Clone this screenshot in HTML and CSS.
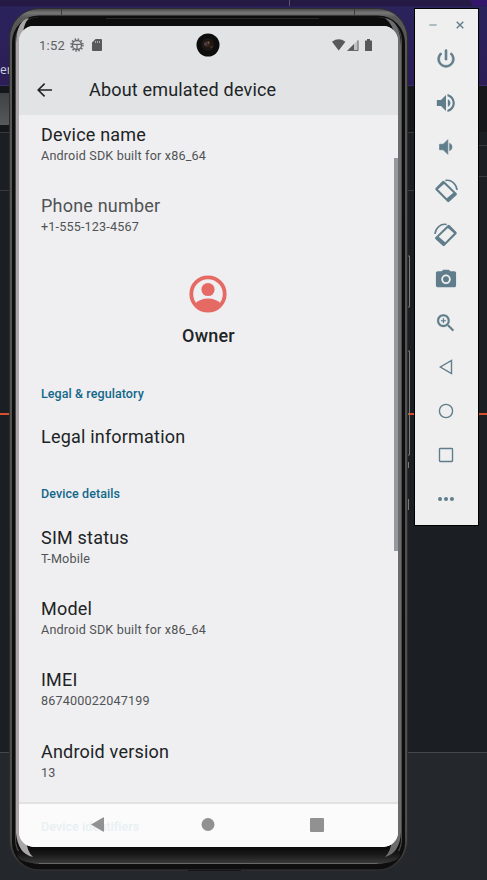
FILE: index.html
```html
<!DOCTYPE html>
<html lang="en">
<head>
<meta charset="utf-8">
<title>Android Emulator</title>
<link rel="stylesheet" href="styles.css">
</head>
<body>
<svg class="backdrop" width="487" height="880" viewBox="0 0 487 880" aria-hidden="true">
  <defs>
    <linearGradient id="purple" x1="0" y1="0" x2="0" y2="1"><stop offset="0" stop-color="#241b43"/><stop offset=".07" stop-color="#241944"/><stop offset=".08" stop-color="#2b235c"/><stop offset="1" stop-color="#2c1d56"/></linearGradient>
    <linearGradient id="grey" x1="0" y1="0" x2="0" y2="1"><stop offset="0" stop-color="#3f4144"/><stop offset="1" stop-color="#56585a"/></linearGradient>
  </defs>
  <rect width="487" height="880" fill="#1b1e23"/>
  <rect width="487" height="85" fill="url(#purple)"/>
  <path d="M470 0h17v6h-14z" fill="#34176a"/>
  <path d="M0 85.500h487" stroke="#38306c"/>
  <rect y="86" width="487" height="46" fill="#15171a"/>
  <rect y="93" width="10" height="32" fill="url(#grey)"/>
  <path d="M0 132.500h10M0 190.500h10M407 132.500h8M407 190.500h8M479 145.500h8M479 176.500h8" stroke="#383a3f"/>
  <path d="M289.500 0v6" stroke="#5a526e"/>
  <path d="M0 414h487" stroke="#d94f2c" stroke-width="2"/>
  <rect y="752" width="487" height="128" fill="#24272c"/>
  <path d="M0 752.500h487" stroke="#44474b"/>
  <path d="M408 256h1.500v51H408M408 351h1.500v104H408M408.500 462v6M408.500 499v11" stroke="#777a7b" fill="none"/>
</svg>
<span class="behind">er</span>
<main class="desk">
  <section class="phone">
    <svg class="frame" width="399" height="863" viewBox="0 0 399 863" aria-hidden="true">
      <defs>
        <linearGradient id="rim" x1="0" y1="0" x2="0" y2="1"><stop offset="0" stop-color="#444"/><stop offset=".005" stop-color="#777"/><stop offset=".01" stop-color="#585858"/><stop offset=".95" stop-color="#4c4c4c"/><stop offset="1" stop-color="#383838"/></linearGradient>
        <linearGradient id="chin" x1="0" y1="0" x2="0" y2="1"><stop offset="0" stop-color="#090909"/><stop offset=".5" stop-color="#181818"/><stop offset="1" stop-color="#383838"/></linearGradient>
      </defs>
      <rect x=".5" y=".5" width="398" height="862" rx="30" fill="url(#rim)" stroke="#2d2d2d"/>
      <rect x="3" y="7.500" width="393" height="854" rx="27" fill="#0e0e0e"/>
      <rect x="6" y="9" width="387" height="847" rx="24" fill="#4a4a4a"/>
      <rect x="7" y="9" width="385" height="846" rx="24" fill="#0c0c0c"/>
      <rect x="8" y="838" width="383" height="17" rx="17" fill="url(#chin)"/>
      <path d="M30 855.500H368" stroke="#686868"/>
      <path d="M7 35Q8 12 20 10Q15 15 14 25L10 42V820Q15 820 17 831Q18 844 24 849Q9 846 7 825Z" fill="#aaa5a6"/>
      <path d="M392 38Q391 12 376 10Q384 17 385 26L389 42V820Q384 820 383 831Q382 843 376 849Q391 845 392 824Z" fill="#6c6c6c"/>
      <path d="M52.500 1v7M345.500 1v7" stroke="#3b3b3b"/>
      <path d="M97 10.500H310" stroke="#292929"/>
      <path d="M179 862.500h53" stroke="#151515"/>
    </svg>
    <div class="screen">
      <header class="top">
        <div class="status">
          <time>1:52</time>
          <svg class="cog" width="14" height="14" viewBox="0 0 14 14" fill="none" stroke="#66686a"><circle cx="7" cy="7" r="4.600" stroke-width="1.500"/><circle cx="7" cy="7" r="6" stroke-width="1.500" stroke-dasharray="1.500 1.642"/><path d="M3 6.300h8M7 7v5" stroke-width="1.200"/></svg>
          <svg class="sd" width="10" height="12" viewBox="0 0 10 12"><path d="M3.600 0H9q1 0 1 1v10q0 1-1 1H1q-1 0-1-1V3.600Z" fill="#58595b"/><path d="M3.500 2v2M5.500 2v2M7.500 2v2" stroke="#a7a8aa"/></svg>
          <svg class="signal" width="41" height="13" viewBox="0 0 41 13" fill="#58595b"><path d="M0 2.800Q6.700-2.100 13.400 2.800L6.700 11.500Z"/><path d="M15 12L26.500.5V12Z" fill="#c0c1c3"/><path d="M15 12L22 5V12Z"/><path d="M16 11.500H26V1.500" fill="none" stroke="#6a6b6d"/><path d="M33.500 1.500h1.500V0h3v1.500h1.500q.5 0 .5.500v9.500q0 .5-.5.500h-6q-.5 0-.5-.5V2q0-.5.500-.5Z"/></svg>
        </div>
        <div class="bar">
          <svg width="16" height="14" viewBox="0 0 16 14" fill="none" stroke="#202325" stroke-width="1.600"><path d="M15 7H1.500M7.600.6L1.200 7l6.400 6.400"/></svg>
          <h1>About emulated device</h1>
        </div>
        <svg class="camera" width="24" height="24" viewBox="0 0 24 24"><circle cx="12" cy="12" r="11.500" fill="#0c0d0c"/><circle cx="12" cy="11.500" r="6.500" fill="#1c1715"/><circle cx="11" cy="11" r="3" fill="#382820"/><circle cx="9.500" cy="11" r="1.500" fill="#50405c"/><circle cx="12.500" cy="9.500" r="1" fill="#985e28"/><circle cx="15.500" cy="14" r="1.200" fill="#4d3028"/></svg>
      </header>
      <div class="list">
        <div class="item"><h2>Device name</h2><p>Android SDK built for x86_64</p></div>
        <div class="item muted"><h2>Phone number</h2><p>+1-555-123-4567</p></div>
        <div class="owner">
          <svg width="38" height="38" viewBox="0 0 38 38"><circle cx="19" cy="19" r="16.700" fill="none" stroke="#e66a64" stroke-width="3.800"/><circle cx="19" cy="14.500" r="6.600" fill="#e66a64"/><path d="M6 29Q10.500 23.500 19 23.500T32 29Q28 36.500 19 36.500T6 29Z" fill="#e66a64"/></svg>
          <strong>Owner</strong>
        </div>
        <h3>Legal &amp; regulatory</h3>
        <div class="item single"><h2>Legal information</h2></div>
        <h3>Device details</h3>
        <div class="item"><h2>SIM status</h2><p>T-Mobile</p></div>
        <div class="item"><h2>Model</h2><p>Android SDK built for x86_64</p></div>
        <div class="item"><h2>IMEI</h2><p>867400022047199</p></div>
        <div class="item"><h2>Android version</h2><p>13</p></div>
      </div>
      <div class="scroll"></div>
      <footer class="nav">
        <span class="ghost">Device identifiers</span>
        <svg width="13" height="15" viewBox="0 0 13 15"><path d="M0 7.500L12 .5q1-.5 1 .5v13q0 1-1 .5Z" fill="#919191"/></svg>
        <svg width="13" height="13" viewBox="0 0 13 13"><circle cx="6.500" cy="6.500" r="6.500" fill="#919191"/></svg>
        <svg width="14" height="14" viewBox="0 0 14 14"><rect width="14" height="14" rx="1" fill="#919191"/></svg>
      </footer>
    </div>
  </section>
  <aside class="tools">
    <div class="window">
      <svg width="8" height="8" viewBox="0 0 8 8"><path d="M.3 4h7.400" stroke="#9aacb3" stroke-width="1.500"/></svg>
      <svg width="8" height="8" viewBox="0 0 8 8"><path d="M.7.700l6.600 6.600M7.300.700L.7 7.300" stroke="#607d8b" stroke-width="1.400"/></svg>
    </div>
    <svg viewBox="0 0 24 24"><path d="M13 2h-2v11h2V2zm4.830 3.170l-1.420 1.420C17.990 7.860 19 9.810 19 12c0 3.870-3.130 7-7 7s-7-3.130-7-7c0-2.190 1.010-4.140 2.580-5.420L6.170 5.170C4.230 6.820 3 9.260 3 12c0 4.970 4.030 9 9 9s9-4.030 9-9c0-2.740-1.230-5.180-3.170-6.830z" stroke="#607d8b" stroke-width=".8"/></svg>
    <svg viewBox="0 0 24 24"><path d="M2 8.600v6.800h4.500l5.500 5.400V3.200L6.500 8.600H2zm14.800 3.400c0-1.800-1-3.300-2.800-4.200v8.400c1.800-.9 2.800-2.400 2.800-4.200zM13.600 2.100v2.600c3.200.9 5.600 3.800 5.600 7.300s-2.400 6.400-5.600 7.300v2.600c4.600-1 8-5 8-9.900s-3.400-8.900-8-9.900z"/></svg>
    <svg viewBox="0 0 24 24"><path d="M18.500 12c0-1.770-1.020-3.290-2.500-4.030v8.050c1.480-.73 2.500-2.250 2.500-4.020zM5 9v6h4l5 5V4L9 9H5z" stroke="#607d8b" stroke-width=".8"/></svg>
    <svg class="rotate" viewBox="0 0 24 24"><path fill-rule="evenodd" d="M8.300 2.300Q9.300 1.300 10.300 2.300L22.600 14.200Q23.400 15.100 22.600 16L15.200 22.800Q14.300 23.600 13.400 22.800L1.600 11Q.8 10 1.700 9ZM10.100 5L4 10.300 12.800 19.200 19.300 13.800Z"/><path d="M11.300 1.500C17.500.2 22.500 5.200 23 11" fill="none" stroke="#607d8b" stroke-width="1.500"/></svg>
    <svg class="rotate flip" viewBox="0 0 24 24"><path fill-rule="evenodd" d="M8.300 2.300Q9.300 1.300 10.300 2.300L22.600 14.200Q23.400 15.100 22.600 16L15.200 22.800Q14.300 23.600 13.400 22.800L1.600 11Q.8 10 1.700 9ZM10.100 5L4 10.300 12.800 19.200 19.300 13.800Z"/><path d="M11.300 1.500C17.500.2 22.500 5.200 23 11" fill="none" stroke="#607d8b" stroke-width="1.500"/></svg>
    <svg viewBox="0 0 24 24"><path fill-rule="evenodd" d="M9 2L7.170 3.500H3c-1.100 0-2 .9-2 2v13.500c0 1.100.9 2 2 2h18c1.100 0 2-.9 2-2V5.500c0-1.100-.9-2-2-2h-4.170L15 2H9zm3 15.500a5.200 5.200 0 1 1 0-10.400 5.200 5.200 0 0 1 0 10.400z"/><circle cx="12" cy="12.300" r="3.200"/></svg>
    <svg viewBox="0 0 24 24"><path d="M15.500 14h-.79l-.28-.27C15.410 12.590 16 11.110 16 9.500 16 5.910 13.090 3 9.500 3S3 5.910 3 9.500 5.910 16 9.500 16c1.610 0 3.090-.59 4.230-1.570l.27.280v.79l5 4.990L20.490 19l-4.990-5zm-6 0C7.010 14 5 11.990 5 9.500S7.010 5 9.500 5 14 7.010 14 9.500 11.990 14 9.500 14zM12 10h-2v2H9v-2H7V9h2V7h1v2h2v1z" transform="translate(-.9 -.6) scale(1.060)" stroke="#607d8b" stroke-width=".2"/></svg>
    <svg viewBox="0 0 24 24"><path d="M18 4.800v14.400L5.800 12Z" fill="none" stroke="#607d8b" stroke-width="1.500"/></svg>
    <svg viewBox="0 0 24 24"><circle cx="12" cy="12" r="7.200" fill="none" stroke="#607d8b" stroke-width="1.500"/></svg>
    <svg viewBox="0 0 24 24"><rect x="4.900" y="4.900" width="14.200" height="14.200" rx=".8" fill="none" stroke="#607d8b" stroke-width="1.500"/></svg>
    <svg viewBox="0 0 24 24"><circle cx="5.500" cy="12" r="2.200"/><circle cx="12" cy="12" r="2.200"/><circle cx="18.500" cy="12" r="2.200"/></svg>
  </aside>
</main>
</body>
</html>
```
FILE: styles.css
```css
* { box-sizing: border-box; }
body { margin: 0; width: 487px; height: 880px; overflow: hidden; position: relative; background: #1b1e23; font-family: Roboto, sans-serif; color: #202325; }
svg { display: block; flex: none; }
h1, h2, h3, p { margin: 0; font-weight: 400; white-space: nowrap; }
.backdrop { position: absolute; left: 0; top: 0; }
.behind { position: absolute; left: 0; top: 62px; font: 12px/16px "Open Sans", sans-serif; color: #d3cfdf; }
.desk { position: relative; display: flex; align-items: flex-start; padding: 8px 0 0 9px; }
.phone { position: relative; width: 399px; height: 863px; padding: 18px 10px 16px; flex: none; }
.frame { position: absolute; left: 0; top: 0; }
.screen { position: relative; width: 379px; height: 821px; border-radius: 15px; overflow: hidden; background: #efeff1; display: flex; flex-direction: column; }
.top { position: relative; height: 89px; background: #e2e3e5; flex: none; }
.status { height: 38px; display: flex; align-items: center; padding: 0 25px 0 20px; color: #5e6062; }
.status time { font-size: 13px; letter-spacing: .25px; width: 31px; }
.sd { margin-left: 8px; }
.signal { margin-left: auto; }
.camera { position: absolute; left: 177px; top: 7px; }
.bar { height: 51px; display: flex; align-items: center; padding: 1px 0 0 18px; gap: 36px; }
.bar h1 { font-size: 18px; line-height: 24px; letter-spacing: .18px; }
.list { flex: 1; padding: 8px 22px 0; }
.item { height: 71.300px; }
.item h2 { font-size: 18px; line-height: 24px; letter-spacing: .2px; }
.item p { font-size: 12.600px; line-height: 16px; margin-top: .9px; color: #505355; letter-spacing: .17px; }
.muted h2 { color: #505355; }
.owner { display: flex; flex-direction: column; align-items: center; padding-top: 9px; height: 120px; }
.owner svg, .owner strong { margin-right: 1px; }
.owner strong { font-size: 18px; line-height: 24px; font-weight: 500; letter-spacing: .2px; margin: 11.200px 0 0; }
.list h3 { font-size: 12.500px; line-height: 16px; font-weight: 500; letter-spacing: .08px; color: #126789; height: 39.500px; }
.item.single { height: 61.300px; }
.scroll { position: absolute; right: 0; top: 132px; width: 4px; height: 393px; background: #9299a1; }
.nav { position: absolute; left: 0; right: 0; bottom: 0; height: 45px; padding: 0 74px 2px 72px; border-top: 2px solid #e2e2e3; background: #fbfbfb; display: flex; align-items: center; justify-content: space-between; }
.nav circle { transform: translateX(.5px); }
.nav svg { overflow: visible; position: relative; }
.ghost { position: absolute; left: 22px; top: 14.500px; font-size: 12.500px; line-height: 16px; font-weight: 500; letter-spacing: .08px; color: #e8f0f2; }
.tools { width: 65px; height: 518px; margin-left: 6px; padding-right: 1px; border: 1px solid #000; background: #efefef; display: flex; flex-direction: column; align-items: center; gap: 22px; flex: none; }
.tools > svg { width: 22px; height: 22px; fill: #607d8b; }
.tools > .rotate { width: 24px; height: 24px; margin: -1px; }
.window { height: 17px; display: flex; align-items: flex-end; gap: 19px; padding-top: 12px; }
.window svg { transform: translateY(3px); }
.flip { transform: scaleX(-1); }
```
